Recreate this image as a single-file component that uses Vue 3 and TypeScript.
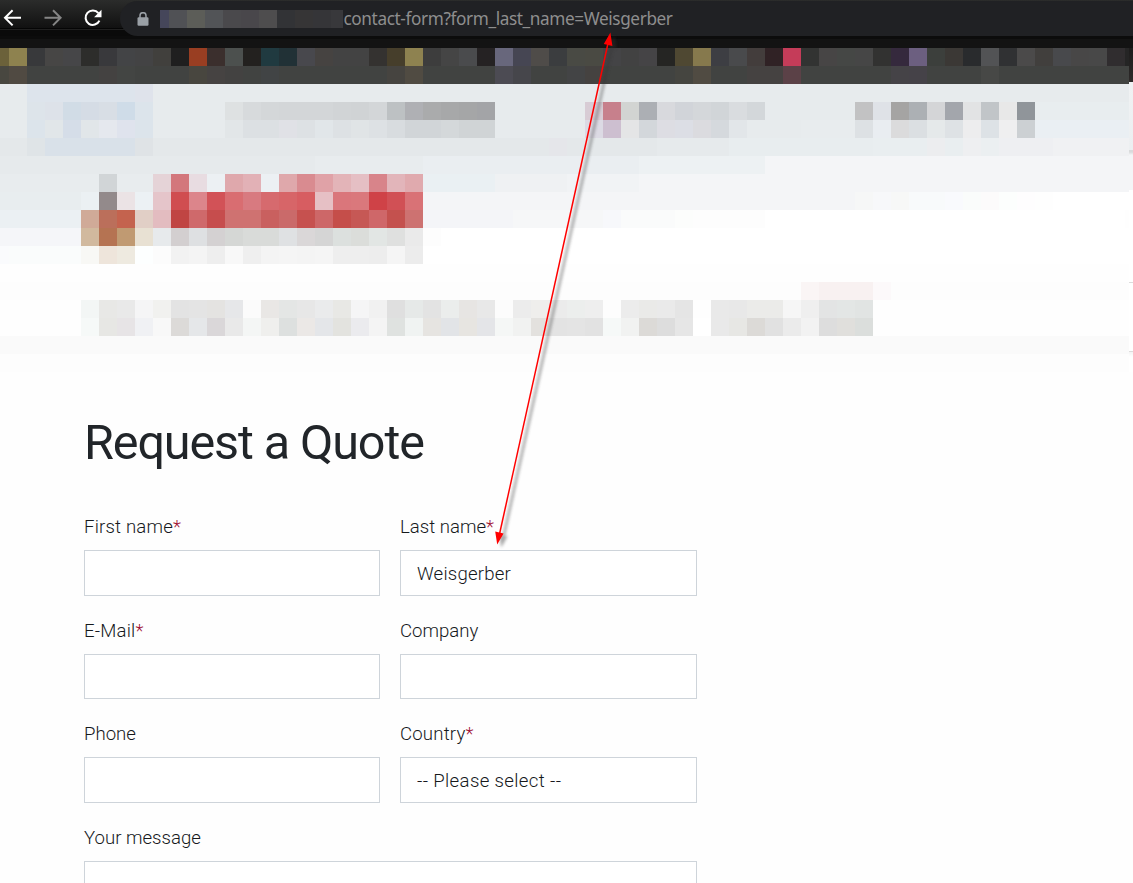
<script setup lang="ts">
import { ref } from 'vue'

interface Tile {
  x: number
  y: number
  width: number
  fill: string
}

const TILE = 18

// Each row lists "startColumn:color color ..." groups; "color*n" repeats a color.
const rows: string[] = [
  '0:6b613a 8e824f 38393b 474645 464648 2d2d2b 39393c 434446 434344 41403d 1f1f1f 993e22 3b2f2d 4c504e 23211f 203a40 213136 48484d 464341 434343*2 343230 463e2b 8e8250 3d3d3d 454545 4a4b4d 252223 68677c 464653 4f4c49 3b3d3f 494a44 4a4a43 444446 424242 454446 252523 4f4832 86794d 3d3e43 494a4c 433d3c 302225 c53c59 323332 474545 454745 464646 323231 35293d 6c5f80 3c3f3c 3b3835 292b2d 525355 303133 4b4a4a 413f3d 48494c 484747 484848 302d2f 252525',
  '0:484740 504a42 414341*4 444241 434543 414341*3 48463f 464342 434241 414341 414445 414341*6 464440 504b42 414341*4 4c4b53 46464b 414341*2 434445 454240 414341*4 454540 504b42 414341*2 454241*2 5b4147 414341*5 454347 454248 414341*3 474846 414341*8',
  '0:e7ebed*2 dde4ec*6 dfe3eb e7ebed*55',
  '0:e7ebed*2 dde4ea dde2e9 d1dce6 d5dce5 d8dee5 cfdce8 dce4eb e7ebed*4 dee1e2 d7dadc d4d7d9 d3d6d8*3 d1d4d6 d0d3d5 d3d6d8 bdc1c3 afb0b4 aaabac a7a8a9 a5a6a7 a3a4a7 e7ebed*5 d8ccd5 c7808c d2d4d2 acafb4 d8d9dd d1d4d9 d4d7da d1d5d8 d9dcdf d3d7da e7ebed*5 c2c2c3 dfe2e7 a5a4a3 acb0b4 d4d5d7 a3a6ac e2e3e4 c1c5c8 e8e8e8 90959a e8edef*6',
  '0:e7ebed*2 dce4eb e1e6e9 d5dde8 e1e6e9 e5e8ee dfe3ed dce4eb e7ebed*4 e2e6e8 dce0e3*2 e0e1e6 dde1e4 e1e6e9 dde1e4 e0e4e6 dde1e4 d8dcdf d1d5d8*2 d4d8da d0d4d6*2 e7ebed*5 dcdae4 cdbfd0 e4e5e6 d3d7db dddde3 dcdee5 dbdbdf d5d9dd e2e6e9 e7ebed*3 e8ecee*3 dde1e4 e9edf1 dbdbdc dbdfe2 e5e9ea dee2e5 ededee dde2e6 efeff0 ccd0d3 eaeff3*6',
  '0:e4e8ea*2 dfe4e7 d9e1e9*5 dfe3e6 e4e8ea*22 e5e6ea e4e8ea*5 e6eaec*4 e8edef*8 e9eef0*3 ecedef e9eef0 eeeff1 ebeff1 eeeff2*3 f0f1f3*6',
  '0:e6eaec*18 e8ecee*6 eaeef1*12 edf1f3*7 f4f5f7*21',
  '0:e8ecee*6 d1d5d7 e8ecee*2 e5d3d7 d3777c e8dce1 ecf0f3 dfa8ac e2b1b6 ecf0f3 dfa8ab d98b90 e0a2a7 e3b4b8 e5bfc4 d8848a e2b5ba e0aaae eaf0f3*4 eff1f3*4 f1f3f5*4 f4f5f7*28',
  '0:e8edef*5 ebf0f3 938a8b ebe3e5 ecf1f4 e5c5ca d04d50 dc858b d25257 d96d71 d87a80 d66a6e d76568 d75d61 e6c0c5 da767b da787c cf4247 d15055 d97276 f4f5f7*24 f6f7f7 f7f8fa f7f8f7 f8fafb*2 f9fafd fafcfb fcfbfb fcfefd fefdfe fefefe ffffff*5',
  '0:ebf0f3*5 d0aa98 bb6f5b c4634e e1cfc6 e3bcc0 c04543 cf696b c64d4d cf7271*2 c9605f ca6a6a c6514f cd6768 c54e4a c65855 cf6769 c4514e cd7271 f4f5f8*5 f6f7f8*5 f7f8fb fafbfb*3 fcfdfc fdfdfd*4 ffffff*20',
  '0:f5f6f9*5 d1b99e b57352 c09a72 e8e1d3 e7eaec d3cfd0 dee0e2 d4d1d2 d5d7d5 d9dbd9*2 dfe1e3 dad7d8 d5d5d5 dce0de dbddda e2e6e4 dfe0df eaeaea fdfdfd ffffff*39',
  '0:fafbfd fafcfc*4 f8f8f5 eee5db eeeae0 fdffff fcfcfc f2f2f2 f4f4f4 eeeeee f8f8f8 efefef f4f4f4 f5f5f5 f4f4f4 f5f5f5 eeeeee*2 ededed f5f5f5 ececec ffffff*40',
  '0:fefefe*64',
  '0:fdfdfd*45 faf5f5 f8f1f1*3 fcf9fa fdfdfd*14',
  '5:f3f6f5 e8e8e6 e9e9e9 f5f5f6 f1f1ef e3e3e3 e4e4e4 e4e3e1 e6e7e9 fbfbfb e9e7e5 e4e6e5 e7e7e7 eaebec e8e8e5 f5f5f6 f1f1f1 dfdfdf e6e9e8 e3e3e3 ebedec e7e5e3 e8e8e8 fcfcfc ececec efeeec ebebeb eceeed eeeeee fdfdfd ececec eaeae8 eaeaea e5e5e5 fefefe e9e9e9 e8e8e8 ebebe9*2 f6f6f6 efefef e3e4e4 e3e6e5 e1e4e3 fefefe*15',
  '5:f6f9f8 e7e7e4 e7e4e6 f0f1f4 f8f8f8 dcdad8 e5e7e9 dad7d9 e9e9e9 f4f6f5 efefed dde0df ebe8e6 e4e6e9 e3e3df ebebee f4f4f4 dfe2e0 f0f3f2 e6e4e1 e2e4e7 e7e5e1 e4e5e8 f5f7f6 f1f2f1 e3e1de e3e3e3 e4e4e4 e2e2e2 f6f9f8 f1f2f1 dcdad7 dddddd e6e6e6 ffffff e9e9e9 e7e7e4 dcdad7 e1e1e1 ebebeb f2f2f2 dddddd e0dfdc dbdedc fefefe*15',
  '0:fafafa*64',
  '0:fdfdfd*64'
]

const tiles: Tile[] = rows.flatMap((row, r) => {
  const [start, list] = row.split(':')
  let column = Number(start)
  return list.split(' ').map((entry) => {
    const [color, repeat] = entry.split('*')
    const count = Number(repeat ?? 1)
    const tile = { x: column * TILE - 9, y: r * TILE, width: count * TILE, fill: '#' + color }
    column += count
    return tile
  })
})

const hostTiles = ['505155', '5c5d58', '525457', '4a494c', '49474b', '4e4d4e', '323336', '363536', '353538', '38383b']

const form = ref({
  firstName: '',
  lastName: 'Weisgerber',
  email: '',
  company: '',
  phone: '',
  country: '',
  message: ''
})
</script>

<template>
  <div class="screen">
    <header class="toolbar">
      <svg class="nav" width="120" height="36" viewBox="0 0 120 36" fill="none">
        <path d="M21 17.8H5.6M12.6 10.2L5 17.8L12.6 25.4" stroke="#fff" stroke-width="2" />
        <path d="M44.5 17.8H60M53 10.2L60.6 17.8L53 25.4" stroke="#858585" stroke-width="2" />
        <path d="M98.4 13.2A7.2 7.2 0 1 0 99.4 20.6" stroke="#fff" stroke-width="2.1" />
        <path d="M101.5 9.8V17.2H94.1Z" fill="#fff" />
      </svg>
      <div class="omnibox">
        <svg class="lock" width="12" height="14" viewBox="0 0 12 14">
          <path d="M3 6V3.7a3 3 0 0 1 6 0V6" fill="none" stroke="#9aa0a6" stroke-width="1.5" />
          <rect x=".5" y="5.2" width="11" height="8.6" rx="1.2" fill="#9aa0a6" />
        </svg>
        <svg class="host" width="183" height="18" viewBox="0 0 183 18" shape-rendering="crispEdges">
          <rect width="9" height="18" fill="#45465a" />
          <rect v-for="(c, i) in hostTiles" :key="i" :x="9 + i * 18" width="18" height="18" :fill="'#' + c" />
        </svg>
        <span class="url">contact-form?form_last_name=Weisgerber</span>
      </div>
    </header>
    <div class="frame"></div>

    <div class="banner">
      <svg width="1129" height="324" viewBox="0 0 1129 324" shape-rendering="crispEdges">
        <rect v-for="(t, i) in tiles" :key="i" :x="t.x" :y="t.y" :width="t.width" height="18" :fill="t.fill" />
      </svg>
      <div class="edge"></div>
    </div>

    <main class="page">
      <h1>Request a Quote</h1>
      <form class="form" @submit.prevent>
        <label class="field">
          <span class="label starred">First name<b>*</b></span>
          <input v-model="form.firstName" type="text" />
        </label>
        <label class="field">
          <span class="label">Last name<b>*</b></span>
          <input v-model="form.lastName" type="text" />
        </label>
        <label class="field">
          <span class="label starred">E-Mail<b>*</b></span>
          <input v-model="form.email" type="text" />
        </label>
        <label class="field">
          <span class="label">Company</span>
          <input v-model="form.company" type="text" />
        </label>
        <label class="field">
          <span class="label">Phone</span>
          <input v-model="form.phone" type="text" />
        </label>
        <label class="field">
          <span class="label starred">Country<b>*</b></span>
          <select v-model="form.country">
            <option value="">-- Please select --</option>
          </select>
        </label>
        <label class="field wide">
          <span class="label">Your message</span>
          <textarea v-model="form.message"></textarea>
        </label>
      </form>
    </main>

    <svg class="arrow" width="1133" height="883" viewBox="0 0 1133 883">
      <defs>
        <filter id="soft" x="-20%" y="-5%" width="150%" height="110%">
          <feGaussianBlur stdDeviation="1.5" />
        </filter>
      </defs>
      <g filter="url(#soft)" opacity=".42" transform="translate(4 3)">
        <path d="M608.3 42L499.3 535" stroke="#333" stroke-width="2.6" />
        <path d="M610.4 32.5L612.4 46L603.8 44ZM497.2 544.5L495.2 531.5L503.6 533.6Z" fill="#333" />
      </g>
      <path d="M608.3 42L499.3 535" stroke="#f00" stroke-width="1.5" />
      <path d="M610.4 32.5L612.4 46L603.8 44ZM497.2 544.5L495.2 531.5L503.6 533.6Z" fill="#f00" />
    </svg>
  </div>
</template>

<style>
html,
body {
  margin: 0;
  background: #fff;
  overflow: hidden;
}
</style>

<style scoped>
.screen {
  position: relative;
  width: 1133px;
  height: 883px;
  overflow: hidden;
  background: #fefefe;
  font-family: Roboto, "Liberation Sans", sans-serif;
}
.toolbar {
  display: flex;
  height: 36px;
  background: linear-gradient(#2b2c2b 0, #111 28px, #050505 28px, #050505 29px, #202020 29px, #202020 30px, #0a0a0a 30px);
}
.nav {
  flex: none;
}
.omnibox {
  flex: 1;
  display: flex;
  align-items: center;
  box-sizing: border-box;
  height: 35px;
  margin-top: 1px;
  padding-left: 17px;
  border-radius: 18px 0 0 18px;
  background: #202124;
}
.lock {
  flex: none;
  margin-right: 11px;
}
.host {
  flex: none;
}
.url {
  margin-left: 0.5px;
  font: 17.2px/24px "Noto Sans", sans-serif;
  letter-spacing: -0.39px;
  color: #8e8e8e;
  white-space: nowrap;
}
.frame {
  height: 12px;
  background: linear-gradient(#0c0c0c 3px, #131313 3px);
}
.banner {
  display: flex;
  height: 324px;
}
.banner svg {
  flex: none;
  display: block;
}
.edge {
  width: 4px;
  background: linear-gradient(#1c1c1c 0, #2e2a29 34px, #f0f2f3 34px, #eceff1 102px, #d9dbdc 102px, #d9dbdc 104px, #f4f5f7 107px, #f4f5f7 142px, #fff 142px, #fff 234px, #dcdcdc 234px, #dcdcdc 235px, #fff 235px, #fff 303px, #dcdcdc 303px, #dcdcdc 304px, #f4f4f4 304px, #fff 309px);
}
.page {
  padding: 39px 0 0 84px;
}
h1 {
  margin: 0;
  height: 102px;
  font-size: 48.5px;
  font-weight: 400;
  line-height: 64px;
  letter-spacing: -1.1px;
  color: #212529;
}
.form {
  display: grid;
  grid-template-columns: 296px 297px;
  gap: 19.9px 20px;
}
.field {
  display: flex;
  flex-direction: column;
}
.wide {
  grid-column: 1 / 3;
}
.label {
  height: 28px;
  margin-bottom: 9.2px;
  padding-bottom: 0;
  font-size: 18.6px;
  font-weight: 300;
  line-height: 28px;
  color: #16191c;
}
.field + .field .label,
.label {
  box-sizing: border-box;
}
.starred {
  letter-spacing: 0.18px;
}
.label b {
  font-weight: 300;
  color: #a00f33;
}
input,
select,
textarea {
  box-sizing: border-box;
  width: 100%;
  height: 45.5px;
  margin: 0;
  padding: 2px 16px 0;
  border: 1px solid #ced4da;
  border-radius: 0;
  outline: none;
  appearance: none;
  background: #fff;
  font-family: inherit;
  font-size: 18.6px;
  font-weight: 300;
  letter-spacing: 0.2px;
  color: #16191c;
}
.field {
  row-gap: 0;
}
.form {
  row-gap: 20.9px;
}
select {
  letter-spacing: 0.36px;
}
textarea {
  height: 120px;
  resize: none;
}
.arrow {
  position: absolute;
  inset: 0;
  pointer-events: none;
}
</style>
